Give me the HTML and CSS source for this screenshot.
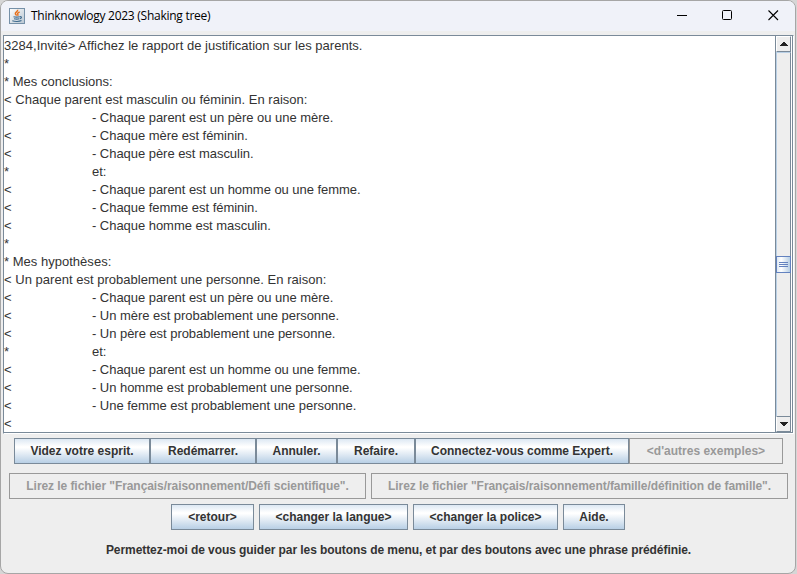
FILE: index.html
```html
<!DOCTYPE html>
<html lang="fr">
<head>
<meta charset="utf-8">
<title>Thinknowlogy 2023 (Shaking tree)</title>
<link rel="stylesheet" href="styles.css">
</head>
<body>
<div class="window">
  <header class="titlebar">
    <svg class="app-icon" width="16" height="16" viewBox="0 0 16 16">
      <defs><linearGradient id="tile" x2="1" y2="1"><stop offset="0" stop-color="#fff"/><stop offset="1" stop-color="#b9c6d2"/></linearGradient></defs>
      <rect x=".5" y=".5" width="15" height="15" fill="url(#tile)" stroke="#7590a8"/>
      <path d="M8.600 1.800c.7 1.600-2.500 2.300-2.300 3.800.1.900 1 1.300 1.300 2M10.600 4c-1.700.7-2.600 1.400-1.800 2.400.4.500.2.900-.2 1.300" fill="none" stroke="#e8701b" stroke-width="1.400"/>
      <path d="M4.500 8.700c2 .6 4.500.5 6.300 0M5 10.700c1.800.5 3.700.5 5.200 0M3.300 12.700c2.500 1.100 7 1 9.200-.1M11 8.700c1.700-.5 2.300 1.200-.2 2" fill="none" stroke="#3f6b8f" stroke-width="1.100"/>
    </svg>
    <h1 class="title">Thinknowlogy 2023 (Shaking tree)</h1>
    <div class="controls">
      <svg width="11" height="11"><path d="M1 5.500h10" stroke="#000"/></svg>
      <svg width="11" height="11"><rect x=".5" y=".5" width="9" height="9" rx="1" fill="none" stroke="#000"/></svg>
      <svg width="11" height="11"><path d="M.5.500l9.500 9.500M10 .5L.5 10" stroke="#000" stroke-width="1.100"/></svg>
    </div>
  </header>
  <main class="scrollpane">
    <div class="console">
      <p>3284,Invité&gt; Affichez le rapport de justification sur les parents.</p>
      <p>*</p>
      <p>* Mes conclusions:</p>
      <p>&lt; Chaque parent est masculin ou féminin. En raison:</p>
      <p>&lt;<span class="tab">- Chaque parent est un père ou une mère.</span></p>
      <p>&lt;<span class="tab">- Chaque mère est féminin.</span></p>
      <p>&lt;<span class="tab">- Chaque père est masculin.</span></p>
      <p>*<span class="tab">et:</span></p>
      <p>&lt;<span class="tab">- Chaque parent est un homme ou une femme.</span></p>
      <p>&lt;<span class="tab">- Chaque femme est féminin.</span></p>
      <p>&lt;<span class="tab">- Chaque homme est masculin.</span></p>
      <p>*</p>
      <p>* Mes hypothèses:</p>
      <p>&lt; Un parent est probablement une personne. En raison:</p>
      <p>&lt;<span class="tab">- Chaque parent est un père ou une mère.</span></p>
      <p>&lt;<span class="tab">- Un mère est probablement une personne.</span></p>
      <p>&lt;<span class="tab">- Un père est probablement une personne.</span></p>
      <p>*<span class="tab">et:</span></p>
      <p>&lt;<span class="tab">- Chaque parent est un homme ou une femme.</span></p>
      <p>&lt;<span class="tab">- Un homme est probablement une personne.</span></p>
      <p>&lt;<span class="tab">- Une femme est probablement une personne.</span></p>
      <p>&lt;</p>
    </div>
    <div class="scrollbar">
      <div class="arrow up"><svg width="8" height="4"><path d="M3 0h2v1h1v1h1v1h1v1H0V3h1V2h1V1h1z" fill="#222"/></svg></div>
      <div class="track"><div class="thumb"><i></i><i></i><i></i></div></div>
      <div class="arrow down"><svg width="8" height="4"><path d="M0 0h8v1H7v1H6v1H5v1H3V3H2V2H1V1H0z" fill="#222"/></svg></div>
    </div>
  </main>
  <div class="row joined">
    <button class="b136">Videz votre esprit.</button><button class="b106">Redémarrer.</button><button class="b81">Annuler.</button><button class="b78">Refaire.</button><button class="b214">Connectez-vous comme Expert.</button><button class="b154" disabled>&lt;d'autres exemples&gt;</button>
  </div>
  <div class="row files">
    <button class="b357" disabled>Lirez le fichier "Français/raisonnement/Défi scientifique".</button>
    <button class="b417" disabled>Lirez le fichier "Français/raisonnement/famille/définition de famille".</button>
  </div>
  <div class="row menu">
    <button class="b83">&lt;retour&gt;</button>
    <button class="b149">&lt;changer la langue&gt;</button>
    <button class="b145">&lt;changer la police&gt;</button>
    <button class="b62">Aide.</button>
  </div>
  <p class="status">Permettez-moi de vous guider par les boutons de menu, et par des boutons avec une phrase prédéfinie.</p>
</div>
</body>
</html>
```
FILE: styles.css
```css
* { box-sizing: border-box; }
body { margin: 0; background: #d6d6d6; font-family: "Liberation Sans", Arial, sans-serif; color: #333; overflow: hidden; }
p, h1 { margin: 0; white-space: pre; }
.window { width: 796px; height: 574px; background: #eee; border: 1px solid #a6a6a6; border-radius: 8px; overflow: hidden; }
.titlebar { height: 30px; background: #f0f2f9; display: flex; align-items: center; padding-left: 8px; }
.title { font: 12px/16px "Open Sans", "Noto Sans", sans-serif; letter-spacing: -.26px; color: #000; margin-left: 6px; flex: 1; }
.app-icon { display: block; margin-bottom: 1px; }
.controls { display: flex; gap: 35px; padding: 0 16px 1px 0; }
.controls svg { display: block; }
.scrollpane { display: flex; width: 791px; height: 399px; margin: 4px 0 0 2px; border: 1px solid #7a8a99; border-right-color: #fff; border-bottom-color: #fff; background: #fff; }
.console { width: 771px; height: 397px; padding-top: 1px; border-bottom: 1px solid #7a8a99; font-size: 13px; line-height: 18px; letter-spacing: .02px; background: #fff; }
.console p { height: 18px; display: grid; grid-template-columns: 88px 1fr; }
.tab { letter-spacing: -.04px; }
.scrollbar { width: 18px; border-left: 1px solid #7a8a99; border-right: 1px solid #7a8a99; border-bottom: 1px solid #7a8a99; display: flex; flex-direction: column; padding-right: 1px; background: #fff; }
.arrow { height: 16px; background: #eee; border-right: 1px solid #7a8a99; display: flex; align-items: center; justify-content: center; border-left: 1px solid #fff; }
.up { border-bottom: 1px solid #7a8a99; border-top: 1px solid #fff; }
.down { border-top: 1px solid #7a8a99; border-bottom: 1px solid #7a8a99; }
.track { flex: 1; background: #eee; border-left: 1px solid #b8cfe5; border-top: 1px solid #b8cfe5; border-right: 1px solid #7a8a99; padding-top: 203px; }
.thumb { height: 17px; margin: 0 -1px; border: 1px solid #6382bf; background: linear-gradient(90deg, #dde8f3, #fff 32%, #b8cfe5); padding: 5px 2px; display: flex; flex-direction: column; gap: 1px; }
.thumb i { height: 1px; background: #6382bf; }
.row { display: flex; justify-content: center; }
.joined { margin: 4px 0 0 1px; }
.files { margin-top: 9px; gap: 5px; margin-left: 1px; }
.menu { margin-top: 5px; gap: 5px; }
button { height: 26px; padding: 0; border: 1px solid #7a8a99; background: linear-gradient(#dde8f3 0, #fff 32%, #fff 36%, #b8cfe5 100%); color: #333; font: bold 12px/24px "Liberation Sans", Arial, sans-serif; white-space: nowrap; }
button:disabled { background: #eee; color: #999; border-color: #999; }
.files button { letter-spacing: -.065px; }
.b136 { width: 136px; } .b106 { width: 106px; } .b81 { width: 81px; } .b78 { width: 78px; }
.b214 { width: 214px; } .b154 { width: 154px; } .b357 { width: 357px; } .b417 { width: 417px; }
.b83 { width: 83px; } .b149 { width: 149px; } .b145 { width: 145px; } .b62 { width: 62px; }
.status { margin: 11px 0 0 1px; text-align: center; font: bold 12px/18px "Liberation Sans", Arial, sans-serif; letter-spacing: -.07px; }
```
